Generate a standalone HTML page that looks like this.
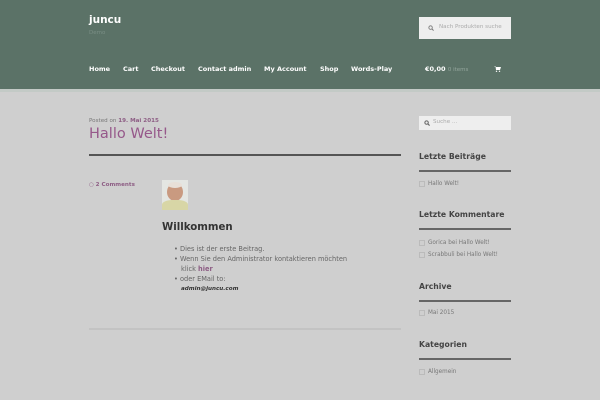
<!DOCTYPE html>
<html><head><meta charset="utf-8"><style>
*{margin:0;padding:0;box-sizing:border-box}
body{width:600px;height:400px;overflow:hidden;background:#cfcfcf;font-family:"DejaVu Sans","Liberation Sans",sans-serif;position:relative}
.a{position:absolute;white-space:nowrap}
#hd{position:absolute;left:0;top:0;width:600px;height:89px;background:#5b7267}
#band{position:absolute;left:0;top:89px;width:600px;height:3px;background:#c3cac6}
.nav{font-size:6.5px;font-weight:bold;color:#fff;top:65px}
.meta{font-size:5.6px;color:#777}
.pl{color:#8d5d84;font-weight:bold}
.li{font-size:6.6px;color:#666}
.wt{font-size:7.7px;font-weight:bold;color:#444;left:419px}
.rule{position:absolute;left:419px;width:92px;height:2px;background:#666}
.si{font-size:5.7px;color:#777;left:428px}
.bx{position:absolute;left:419px;width:6px;height:6px;border:1px solid #bbb}
</style></head><body>
<div id="hd"></div><div id="band"></div>
<div class="a" style="left:89px;top:14px;font-size:10.5px;font-weight:bold;color:#fff">juncu</div>
<div class="a" style="left:89px;top:30px;font-size:5.5px;color:#7a8e85">Demo</div>
<div class="a" style="left:419px;top:17px;width:92px;height:22px;background:#eeeeee"></div>
<svg class="a" style="left:428px;top:25px" width="6" height="6" viewBox="0 0 7 7"><circle cx="3" cy="3" r="2" fill="none" stroke="#777" stroke-width="1"/><path d="M4.4 4.4L6.5 6.5" stroke="#777" stroke-width="1.2"/></svg>
<div class="a" style="left:439px;top:24px;font-size:5.6px;color:#aaa">Nach Produkten suche</div>
<div class="a nav" style="left:89px">Home</div>
<div class="a nav" style="left:123px">Cart</div>
<div class="a nav" style="left:151px">Checkout</div>
<div class="a nav" style="left:198px">Contact admin</div>
<div class="a nav" style="left:264px">My Account</div>
<div class="a nav" style="left:320px">Shop</div>
<div class="a nav" style="left:351px">Words-Play</div>
<div class="a nav" style="left:425px">€0,00 <span style="font-weight:normal;font-size:5.5px;color:#94a69d">0 items</span></div>
<svg class="a" style="left:494px;top:66px" width="7" height="6" viewBox="0 0 7 6"><path d="M0 0H1.5L2 4H6L7 1H1.7" fill="#fff"/><circle cx="2.5" cy="5.3" r=".7" fill="#fff"/><circle cx="5.5" cy="5.3" r=".7" fill="#fff"/></svg>

<div class="a meta" style="left:89px;top:118px">Posted on <span class="pl">19. Mai 2015</span></div>
<div class="a" style="left:89px;top:126px;font-size:14.5px;color:#96588a">Hallo Welt!</div>
<div class="a" style="left:89px;top:154px;width:312px;height:2px;background:#555"></div>
<div class="a meta" style="left:89px;top:182px"><span style="color:#8d5d84">&#9675;</span> <span class="pl">2 Comments</span></div>
<div class="a" style="left:162px;top:180px;width:26px;height:30px;background:#e4e6e2;overflow:hidden">
<div style="position:absolute;left:5px;top:3px;width:16px;height:18px;border-radius:50%;background:#c99a80"></div>
<div style="position:absolute;left:6px;top:2px;width:14px;height:6px;border-radius:50%;background:#e8e0d8"></div>
<div style="position:absolute;left:0;top:20px;width:26px;height:12px;border-radius:40% 40% 0 0;background:#d8d6a6"></div>
</div>
<div class="a" style="left:162px;top:222px;font-size:10.2px;font-weight:bold;color:#333">Willkommen</div>
<div class="a li" style="left:174px;top:245px">• Dies ist der erste Beitrag.</div>
<div class="a li" style="left:174px;top:255px">• Wenn Sie den Administrator kontaktieren möchten</div>
<div class="a li" style="left:181px;top:265px">klick <span class="pl">hier</span></div>
<div class="a li" style="left:174px;top:275px">• oder EMail to:</div>
<div class="a" style="left:181px;top:286px;font-size:5.6px;font-weight:bold;font-style:italic;color:#333">admin@juncu.com</div>
<div class="a" style="left:89px;top:328px;width:312px;height:2px;background:#c3c3c3"></div>

<div class="a" style="left:419px;top:116px;width:92px;height:14px;background:#eeeeee"></div>
<svg class="a" style="left:424px;top:120px" width="6" height="6" viewBox="0 0 7 7"><circle cx="3" cy="3" r="2" fill="none" stroke="#666" stroke-width="1.2"/><path d="M4.4 4.4L6.5 6.5" stroke="#666" stroke-width="1.3"/></svg>
<div class="a" style="left:433px;top:119px;font-size:5.6px;color:#aaa">Suche …</div>

<div class="a wt" style="top:152px">Letzte Beiträge</div>
<div class="rule" style="top:170px"></div>
<div class="bx" style="top:181px"></div><div class="a si" style="top:181px">Hallo Welt!</div>
<div class="a wt" style="top:210px">Letzte Kommentare</div>
<div class="rule" style="top:228px"></div>
<div class="bx" style="top:240px"></div><div class="a si" style="top:240px">Gorica bei Hallo Welt!</div>
<div class="bx" style="top:252px"></div><div class="a si" style="top:252px">Scrabbuli bei Hallo Welt!</div>
<div class="a wt" style="top:282px">Archive</div>
<div class="rule" style="top:300px"></div>
<div class="bx" style="top:310px"></div><div class="a si" style="top:310px">Mai 2015</div>
<div class="a wt" style="top:340px">Kategorien</div>
<div class="rule" style="top:358px"></div>
<div class="bx" style="top:369px"></div><div class="a si" style="top:369px">Allgemein</div>
</body></html>
